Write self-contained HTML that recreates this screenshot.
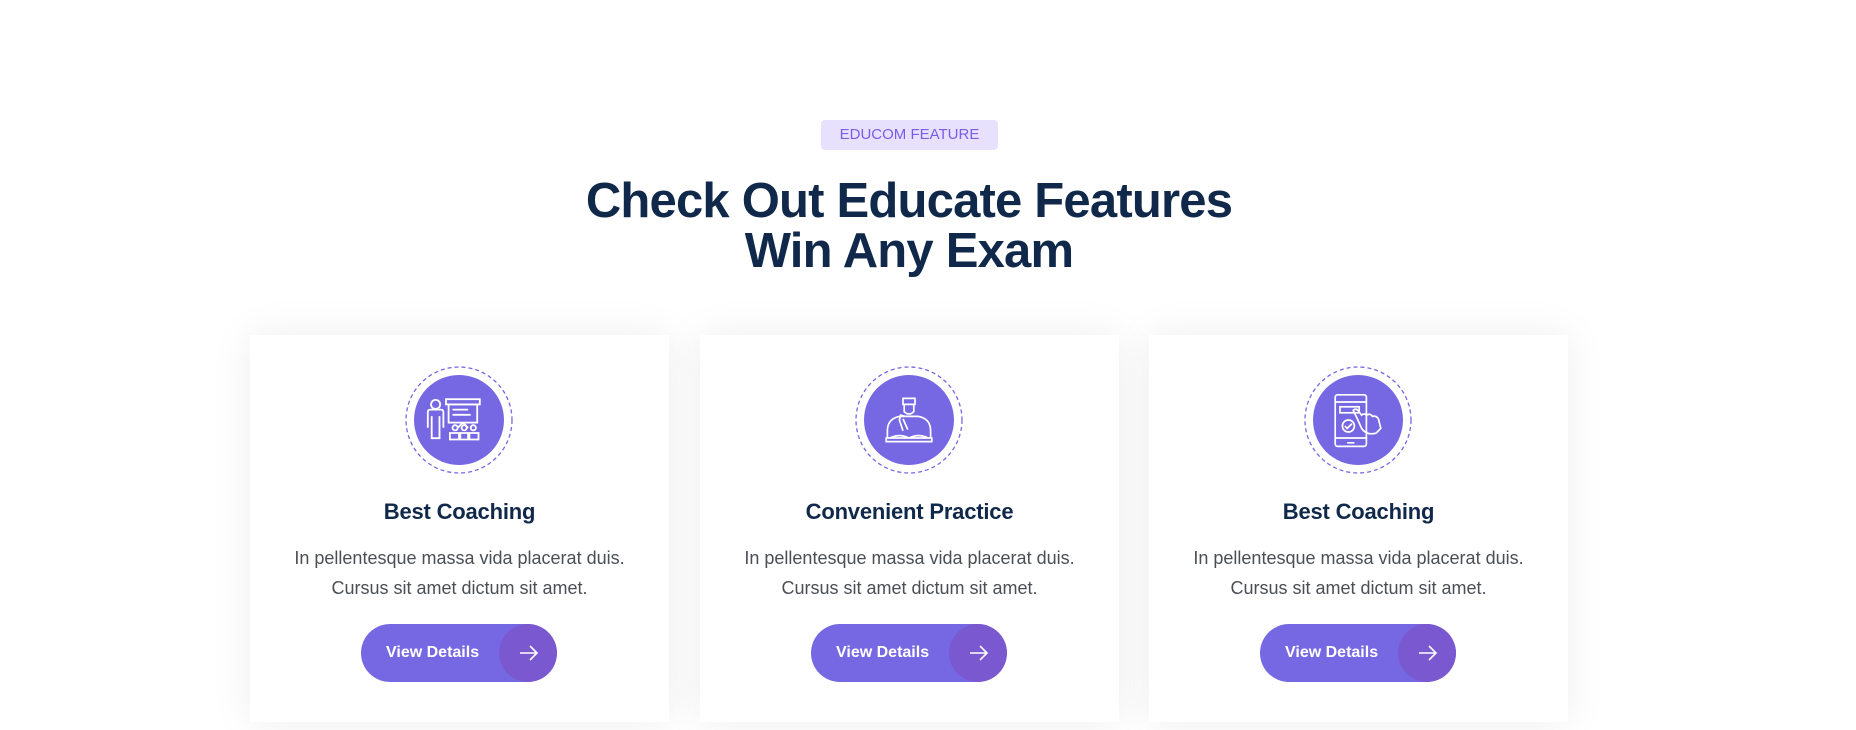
<!DOCTYPE html>
<html><head><meta charset="utf-8"><style>
*{margin:0;padding:0;box-sizing:border-box}
body{width:1856px;height:730px;background:#fff;font-family:"Liberation Sans",sans-serif;position:relative;overflow:hidden}
.badge{position:absolute;left:821px;top:120px;width:177px;height:30px;background:#e8e1fd;border-radius:4px;color:#7a5ce6;font-size:15px;line-height:30px;text-align:center}
h1{position:absolute;left:-19px;width:1856px;top:176px;text-align:center;color:#10294a;font-size:49px;line-height:50px;font-weight:bold;letter-spacing:-0.8px}
.card{position:absolute;top:335px;width:419px;height:387px;background:#fff;box-shadow:0 0 40px rgba(0,0,0,0.07)}
.ic{position:absolute;left:154px;top:30px;width:110px;height:110px}
.t{position:absolute;left:0;width:100%;top:164px;text-align:center;color:#10294a;font-size:22px;font-weight:bold;letter-spacing:-0.2px}
.p{position:absolute;left:0;width:100%;top:208px;text-align:center;color:#4a4f55;font-size:18px;line-height:30px}
.btn{position:absolute;left:111px;top:289px;width:196px;height:58px;border-radius:29px;background:#7668e3;overflow:hidden}
.btn span{position:absolute;left:25px;top:0;line-height:58px;color:#fff;font-size:16px;font-weight:bold}
.btn i{position:absolute;right:0;top:0;width:58px;height:58px;border-radius:29px;background:#7a58cf}
</style></head><body>
<div class="badge">EDUCOM FEATURE</div>
<h1>Check Out Educate Features<br>Win Any Exam</h1>

<div class="card" style="left:250px">
<svg class="ic" viewBox="0 0 110 110"><circle cx="55" cy="55" r="53" fill="none" stroke="#7668e3" stroke-width="1.3" stroke-dasharray="4 3"/><circle cx="55" cy="55" r="45" fill="#7668e3"/>
<g fill="none" stroke="#fff" stroke-width="1.4" transform="translate(55 55) scale(1.3) translate(-52 -53)"><circle cx="34" cy="41" r="3.5"/><path d="M28 59V47q0-2 2-2h8q2 0 2 2v12M31 50v17h6V50"/><rect x="42" y="37" width="26" height="4"/><rect x="44" y="41" width="22" height="14"/><path d="M47 45h12M47 49h14M55 55l-4 4M55 55l4 4"/><circle cx="49" cy="59" r="2"/><circle cx="56" cy="59" r="2"/><circle cx="63" cy="59" r="2"/><path d="M45 68v-5h8v5zM52 68v-5h8v5zM59 68v-5h8v5z"/></g></svg>
<div class="t">Best Coaching</div>
<div class="p">In pellentesque massa vida placerat duis.<br>Cursus sit amet dictum sit amet.</div>
<div class="btn"><span>View Details</span><i></i><svg style="position:absolute;right:17px;top:20px" width="22" height="18" viewBox="0 0 22 18"><path d="M2 9h17M12 2l7 7-7 7" fill="none" stroke="#fff" stroke-width="1.6"/></svg></div>
</div>

<div class="card" style="left:700px">
<svg class="ic" viewBox="0 0 110 110"><circle cx="55" cy="55" r="53" fill="none" stroke="#7668e3" stroke-width="1.3" stroke-dasharray="4 3"/><circle cx="55" cy="55" r="45" fill="#7668e3"/>
<g fill="none" stroke="#fff" stroke-width="1.4" transform="translate(55 55) scale(1.2) translate(-55 -56)"><path d="M50 38h10v5H50zM51 43v6q4 4 8 0v-6"/><path d="M37 71v-6q0-10 10-12h16q10 2 10 12v6"/><path d="M50 55l4 9M52 53l-4-1-1 4 3 9"/><path d="M39 71q8-4 16 0q8-4 16 0M36 71h38v3H36z"/></g></svg>
<div class="t">Convenient Practice</div>
<div class="p">In pellentesque massa vida placerat duis.<br>Cursus sit amet dictum sit amet.</div>
<div class="btn"><span>View Details</span><i></i><svg style="position:absolute;right:17px;top:20px" width="22" height="18" viewBox="0 0 22 18"><path d="M2 9h17M12 2l7 7-7 7" fill="none" stroke="#fff" stroke-width="1.6"/></svg></div>
</div>

<div class="card" style="left:1149px">
<svg class="ic" viewBox="0 0 110 110"><circle cx="55" cy="55" r="53" fill="none" stroke="#7668e3" stroke-width="1.3" stroke-dasharray="4 3"/><circle cx="55" cy="55" r="45" fill="#7668e3"/>
<g fill="none" stroke="#fff" stroke-width="1.4" transform="translate(55 55) scale(1.2) translate(-55 -57)"><rect x="36" y="36" width="26" height="43" rx="2"/><path d="M36 42h26M36 72h26M46 76h6"/><rect x="40" y="46" width="16" height="5"/><circle cx="47" cy="62" r="5"/><path d="M44 62l2 2 4-4"/><path d="M54 55l4 9q4 6 12 4l4-4-2-8q-2-3-5-2-2-3-5-1-2-2-4 0l-3-4q-2-2-4 0z"/></g></svg>
<div class="t">Best Coaching</div>
<div class="p">In pellentesque massa vida placerat duis.<br>Cursus sit amet dictum sit amet.</div>
<div class="btn"><span>View Details</span><i></i><svg style="position:absolute;right:17px;top:20px" width="22" height="18" viewBox="0 0 22 18"><path d="M2 9h17M12 2l7 7-7 7" fill="none" stroke="#fff" stroke-width="1.6"/></svg></div>
</div>
</body></html>
